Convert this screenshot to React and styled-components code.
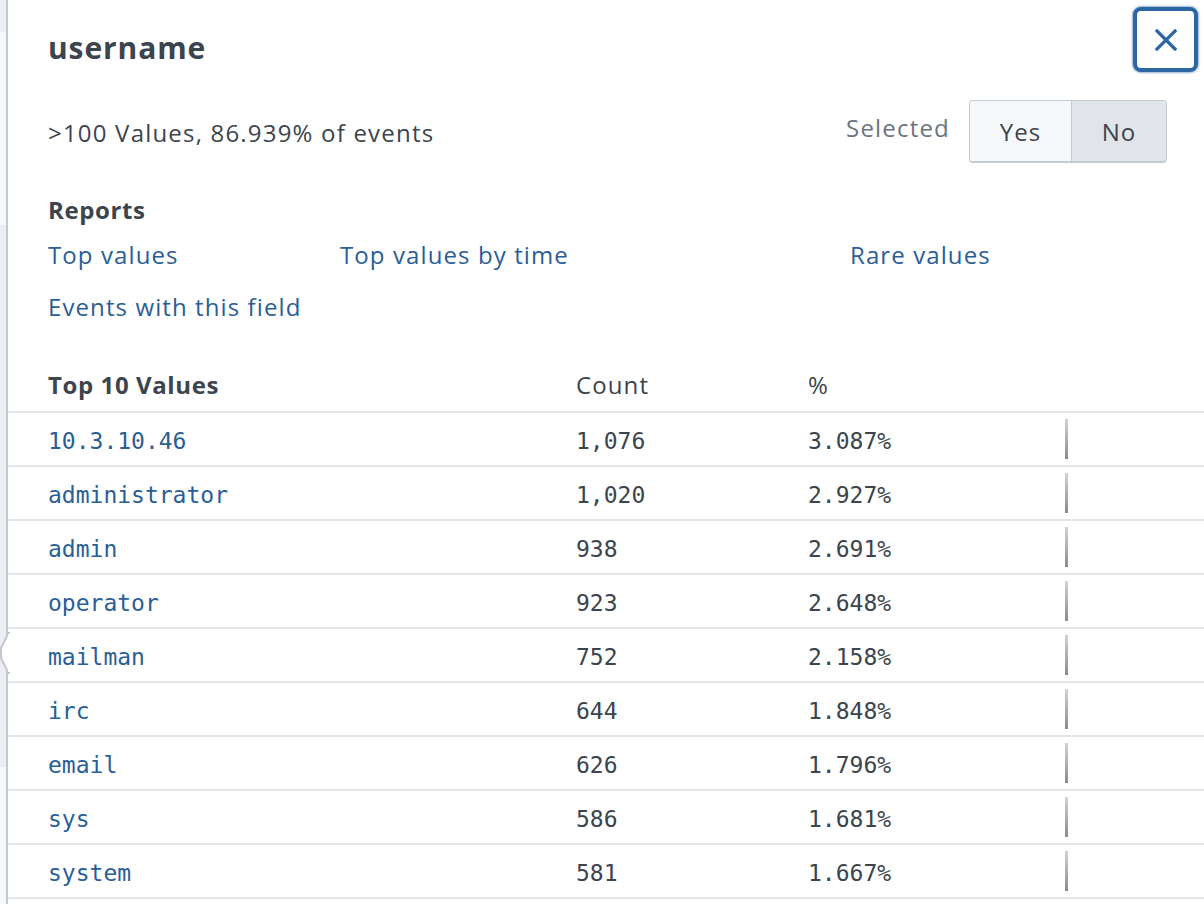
import React from 'react'
import styled, {createGlobalStyle} from 'styled-components'

const GlobalStyle = createGlobalStyle`
  html, body {
    margin: 0;
    padding: 0;
    background: #ffffff;
  }
  body {
    font-family: "Open Sans", "Liberation Sans", sans-serif;
    color: #3c444d;
  }
`

const Page = styled.div`
  display: flex;
  width: 1204px;
  height: 904px;
  overflow: hidden;
`
const Strip = styled.div`
  width: 6px;
  display: flex;
  flex-direction: column;
`
const Band = styled.div`
  height: ${p => p.h}px;
  flex: ${p => (p.h ? 'none' : '1')};
  background: ${p => (p.light ? '#f7f8fa' : '#eceef1')};
`
const Popover = styled.div`
  position: relative;
  flex: 1;
  border-left: 2px solid #c3c9d2;
  background: #ffffff;
`
const Arrow = styled.svg`
  position: absolute;
  left: -8px;
  top: 632px;
`
const Header = styled.div`
  display: flex;
  justify-content: space-between;
  align-items: flex-start;
  padding: 7px 6px 0 40px;
`
const Title = styled.h2`
  margin: 23px 0 0;
  font-size: 30px;
  line-height: 36px;
  font-weight: 700;
  letter-spacing: 0.9px;
  color: #3c444d;
`
const CloseButton = styled.button`
  width: 65px;
  height: 65px;
  display: flex;
  align-items: center;
  justify-content: center;
  background: #ffffff;
  border: 4px solid #2c67a4;
  border-radius: 8px;
  box-shadow: 0 0 2px 1px rgba(44, 103, 164, 0.5);
  padding: 0;
`
const Summary = styled.div`
  display: flex;
  align-items: center;
  justify-content: space-between;
  margin-top: 28px;
  padding: 0 37px 0 40px;
  height: 63px;
`
const Stats = styled.span`
  font-size: 24px;
  line-height: 30px;
  letter-spacing: 1.2px;
  margin-top: 2px;
`
const SelectedGroup = styled.div`
  display: flex;
  align-items: center;
  gap: 19px;
`
const Label = styled.span`
  font-size: 24px;
  letter-spacing: 1.2px;
  color: #6b7480;
  margin-top: -8px;
`
const Toggle = styled.div`
  display: flex;
  height: 63px;
  border: 1px solid #c3cbd4;
  border-bottom-width: 2px;
  border-radius: 4px;
  overflow: hidden;
  box-sizing: border-box;
`
const ToggleButton = styled.div`
  width: ${p => p.w}px;
  display: flex;
  align-items: center;
  justify-content: center;
  font-size: 24px;
  letter-spacing: 1px;
  color: #3c444d;
  background: ${p => (p.active ? '#e1e5ea' : '#f7f8fa')};
  border-left: ${p => (p.active ? '1px solid #c3cbd4' : 'none')};
`
const Section = styled.div`
  padding: 0 40px;
  margin-top: 32px;
`
const SectionTitle = styled.div`
  font-size: 24px;
  line-height: 30px;
  font-weight: 700;
  letter-spacing: 0.6px;
`
const Links = styled.div`
  display: grid;
  grid-template-columns: 292px 510px auto;
  row-gap: 22px;
  margin-top: 15px;
`
const Link = styled.a`
  font-size: 24px;
  line-height: 30px;
  letter-spacing: 1.1px;
  color: #2a5e96;
  text-decoration: none;
  cursor: pointer;
`
const Table = styled.div`
  margin-top: 37px;
`
const Row = styled.div`
  display: grid;
  grid-template-columns: 568px 232px 257px 1fr;
  align-items: center;
  height: 52px;
  border-bottom: 2px solid #e1e6eb;
`
const HeadCell = styled.div`
  font-size: 24px;
  font-weight: ${p => (p.bold ? 700 : 400)};
  letter-spacing: ${p => (p.bold ? '0.6px' : '1.1px')};
  padding-left: ${p => (p.first ? '40px' : '0')};
  margin-top: -2px;
`
const Cell = styled.div`
  font-family: "DejaVu Sans Mono", "Liberation Mono", monospace;
  font-size: 23px;
  padding-top: 3px;
  color: ${p => (p.link ? '#2a5e96' : '#3c444d')};
  padding-left: ${p => (p.first ? '40px' : '0')};
`
const BarCell = styled.div`
  display: flex;
  align-items: center;
  height: 100%;
`
const Bar = styled.div`
  height: 40px;
  background: linear-gradient(#cfd4db, #858c96);
`

const rows = [
  ['10.3.10.46', '1,076', 3.087],
  ['administrator', '1,020', 2.927],
  ['admin', '938', 2.691],
  ['operator', '923', 2.648],
  ['mailman', '752', 2.158],
  ['irc', '644', 1.848],
  ['email', '626', 1.796],
  ['sys', '586', 1.681],
  ['system', '581', 1.667],
]

export default function App(){
  return(
    <Page>
      <GlobalStyle/>
      <Strip>
        <Band h={32}/>
        <Band h={193} light/>
        <Band h={542}/>
        <Band light/>
      </Strip>
      <Popover>
        <Arrow width="10" height="42" viewBox="0 0 10 42">
          <polygon points="9,0 1,16 1,26 9,42" fill="#ffffff" stroke="#c3c9d2" strokeWidth="2"/>
          <rect x="8" y="2" width="3" height="38" fill="#ffffff"/>
        </Arrow>
        <Header>
          <Title>username</Title>
          <CloseButton aria-label="Close">
            <svg width="24" height="24" viewBox="0 0 24 24">
              <path d="M3 3 L21 21 M21 3 L3 21" stroke="#2c67a4" strokeWidth="3.2" strokeLinecap="square"/>
            </svg>
          </CloseButton>
        </Header>
        <Summary>
          <Stats>&gt;100 Values, 86.939% of events</Stats>
          <SelectedGroup>
            <Label>Selected</Label>
            <Toggle>
              <ToggleButton w={101}>Yes</ToggleButton>
              <ToggleButton w={94} active>No</ToggleButton>
            </Toggle>
          </SelectedGroup>
        </Summary>
        <Section>
          <SectionTitle>Reports</SectionTitle>
          <Links>
            <Link>Top values</Link>
            <Link>Top values by time</Link>
            <Link>Rare values</Link>
            <Link>Events with this field</Link>
          </Links>
        </Section>
        <Table>
          <Row>
            <HeadCell first bold>Top 10 Values</HeadCell>
            <HeadCell>Count</HeadCell>
            <HeadCell>%</HeadCell>
            <div/>
          </Row>
          {rows.map(([value, count, pct]) => (
            <Row key={value}>
              <Cell first link>{value}</Cell>
              <Cell>{count}</Cell>
              <Cell>{pct.toFixed(3)}%</Cell>
              <BarCell>
                <Bar style={{width: `${Math.max(3, Math.round(pct * 1.1))}px`}}/>
              </BarCell>
            </Row>
          ))}
        </Table>
      </Popover>
    </Page>
  )
}
